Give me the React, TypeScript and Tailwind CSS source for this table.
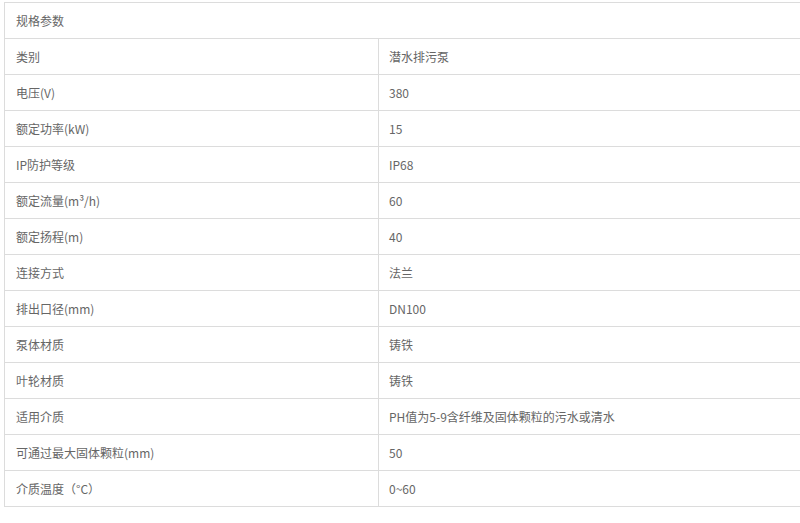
import React from 'react';

const rows: [string, string][] = [
  ['类别', '潜水排污泵'],
  ['电压(V)', '380'],
  ['额定功率(kW)', '15'],
  ['IP防护等级', 'IP68'],
  ['额定流量(m³/h)', '60'],
  ['额定扬程(m)', '40'],
  ['连接方式', '法兰'],
  ['排出口径(mm)', 'DN100'],
  ['泵体材质', '铸铁'],
  ['叶轮材质', '铸铁'],
  ['适用介质', 'PH值为5-9含纤维及固体颗粒的污水或清水'],
  ['可通过最大固体颗粒(mm)', '50'],
  ['介质温度（°C）', '0~60'],
];

export default function App() {
  return (
    <div
      className="w-[800px] h-[523px] overflow-hidden bg-white pt-[2px] pl-[4px] text-[12px] text-[#666]"
      style={{ fontFamily: '"Microsoft YaHei", "Noto Sans CJK SC", "Noto Sans", sans-serif' }}
    >
      <div className="w-[810px] border-t border-l border-[#dcdcdc]">
        {/* Title */}
        <div className="h-[36px] flex items-center pl-[11px] border-b border-[#dcdcdc]">规格参数</div>

        {rows.map(([name, value]) => (
          <div key={name} className="flex h-[36px] border-b border-[#dcdcdc]">
            <div className="w-[374px] flex items-center pl-[11px] border-r border-[#dcdcdc]">{name}</div>
            <div className="flex-1 flex items-center pl-[10px]">{value}</div>
          </div>
        ))}
      </div>
    </div>
  );
}
